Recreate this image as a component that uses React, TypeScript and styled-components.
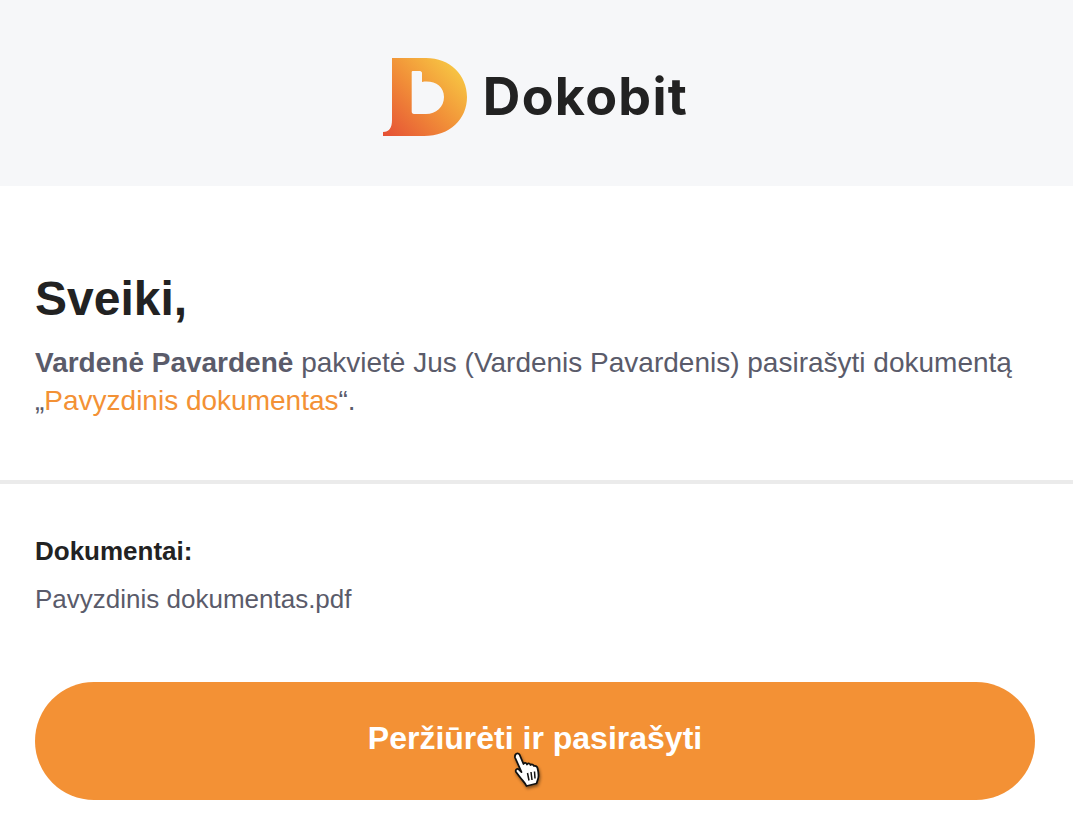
import React from "react";
import styled, { createGlobalStyle } from "styled-components";

const GlobalStyle = createGlobalStyle`
  html, body {
    margin: 0;
    padding: 0;
    background: #ffffff;
  }
  body {
    font-family: "Liberation Sans", Arial, sans-serif;
    overflow: hidden;
  }
`;

const Page = styled.div`
  width: 1073px;
  height: 829px;
  display: flex;
  flex-direction: column;
`;

const Header = styled.header`
  height: 178px;
  padding-top: 8px;
  padding-right: 3px;
  background: #f6f7f9;
  display: flex;
  align-items: center;
  justify-content: center;
`;

const Logo = styled.div`
  display: flex;
  align-items: center;
  gap: 15px;
`;

const LogoText = styled.span`
  font-family: Inter, "Liberation Sans", sans-serif;
  font-weight: 700;
  font-size: 52px;
  line-height: 60px;
  letter-spacing: 1.3px;
  color: #222222;
`;

const Intro = styled.section`
  padding: 85px 35px 0;
  height: 209px;
`;

const Heading = styled.h1`
  margin: 0 0 18px;
  font-size: 48px;
  line-height: 55px;
  font-weight: 700;
  color: #222222;
`;

const Paragraph = styled.p`
  margin: 0;
  font-size: 28px;
  line-height: 38px;
  color: #5a5b6a;
`;

const DocLink = styled.a`
  color: #f39135;
  text-decoration: none;
`;

const Divider = styled.hr`
  margin: 0;
  border: 0;
  height: 4px;
  background: #ebebeb;
`;

const Documents = styled.section`
  padding: 52px 35px 0;
`;

const DocumentsTitle = styled.h2`
  margin: 0 0 18px;
  font-size: 26px;
  line-height: 30px;
  font-weight: 700;
  color: #222222;
`;

const DocumentName = styled.div`
  font-size: 26px;
  line-height: 30px;
  color: #5a5b6a;
`;

const ActionRow = styled.div`
  padding: 68px 38px 0 35px;
`;

const Button = styled.a`
  position: relative;
  display: flex;
  align-items: center;
  justify-content: center;
  height: 113px;
  padding-bottom: 5px;
  border-radius: 59px;
  background: #f39135;
  color: #ffffff;
  font-size: 32px;
  font-weight: 700;
  text-decoration: none;
`;

const Cursor = styled.svg`
  position: absolute;
  left: 477px;
  top: 70px;
  filter: drop-shadow(1px 2px 1.5px rgba(0, 0, 0, 0.45));
`;

const LogoMark = () => (
  <svg width="86" height="80" viewBox="0 0 86 80">
    <defs>
      <linearGradient id="markGradient" x1="0" y1="1" x2="1" y2="0.1">
        <stop offset="0" stopColor="#e54f35" />
        <stop offset="0.5" stopColor="#f18f38" />
        <stop offset="1" stopColor="#f8cf45" />
      </linearGradient>
    </defs>
    <path
      fill="url(#markGradient)"
      fillRule="evenodd"
      d="M10 1 H44 C68 1 85 18 85 40 C85 62 68 79 42 79 H1 V75 C7 75 10 71 10 63 Z
         M31 14 H38 C39 14 40 15 40 16 V25 C52 23 62 29 62 40 C62 50 54 57 44 57 H32 C30.500 57 29.700 56 29.700 54.500 V15.500 C29.700 14.500 30 14 31 14 Z"
    />
  </svg>
);

const HandCursor = () => (
  <Cursor width="32" height="38" viewBox="0 0 32 38">
    <path
      fill="#ffffff"
      stroke="#111111"
      strokeWidth="1.8"
      strokeLinejoin="round"
      d="M3.500 2.500 C4.500 1 6.500 1 7.500 2.500 L11.500 12 C12 10.500 14.500 10.500 15 12.500 C15.500 11 18 11 18.500 13 C19.500 12 21.500 12.500 22 14 C23 13.500 25 14 25.500 16 C26.500 20 27 24 26 27 L24.500 31.500 L14.500 34 C13.500 31.500 11 29 9 26.500 L4 20 C3 18 5 16 7 17.500 L9.500 20 L3 5.500 C2.800 4.500 3 3.500 3.500 2.500 Z"
    />
    <path
      fill="none"
      stroke="#111111"
      strokeWidth="1.500"
      d="M15.500 21 L17 28.500 M19 20 L20 28 M22.500 19.500 L23 26.500"
    />
  </Cursor>
);

export default function App() {
  return (
    <Page>
      <GlobalStyle />
      <Header>
        <Logo>
          <LogoMark />
          <LogoText>Dokobit</LogoText>
        </Logo>
      </Header>
      <Intro>
        <Heading>Sveiki,</Heading>
        <Paragraph>
          <strong>Vardenė Pavardenė</strong> pakvietė Jus (Vardenis Pavardenis) pasirašyti dokumentą
          <br />„<DocLink href="#">Pavyzdinis dokumentas</DocLink>“.
        </Paragraph>
      </Intro>
      <Divider />
      <Documents>
        <DocumentsTitle>Dokumentai:</DocumentsTitle>
        <DocumentName>Pavyzdinis dokumentas.pdf</DocumentName>
      </Documents>
      <ActionRow>
        <Button href="#">
          Peržiūrėti ir pasirašyti
          <HandCursor />
        </Button>
      </ActionRow>
    </Page>
  );
}
